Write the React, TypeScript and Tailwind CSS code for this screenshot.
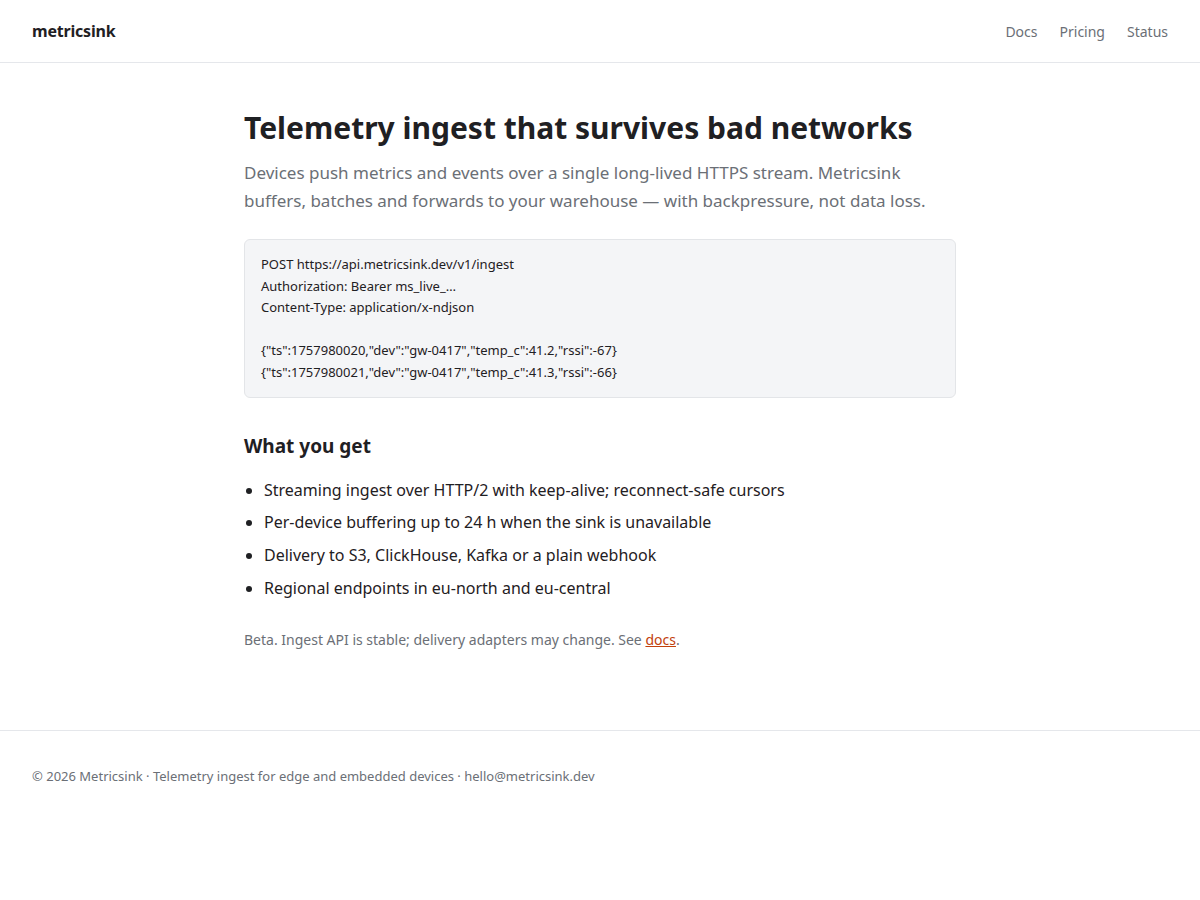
import React from 'react';

const features = [
  'Streaming ingest over HTTP/2 with keep-alive; reconnect-safe cursors',
  'Per-device buffering up to 24 h when the sink is unavailable',
  'Delivery to S3, ClickHouse, Kafka or a plain webhook',
  'Regional endpoints in eu-north and eu-central',
];

const codeLines = [
  'POST https://api.metricsink.dev/v1/ingest',
  'Authorization: Bearer ms_live_…',
  'Content-Type: application/x-ndjson',
  '',
  '{"ts":1757980020,"dev":"gw-0417","temp_c":41.2,"rssi":-67}',
  '{"ts":1757980021,"dev":"gw-0417","temp_c":41.3,"rssi":-66}',
];

export default function App() {
  return (
    <div className="min-h-screen bg-white text-[#1f2023] font-['Noto_Sans',sans-serif]">
      {/* Header */}
      <header className="h-[63px] border-b border-[#e5e7eb] flex items-center justify-between px-8">
        <span className="text-[16px] font-bold tracking-[-0.2px]">metricsink</span>
        <nav className="flex items-center gap-[22px] text-[14px] text-[#6b6f76]">
          <a href="#">Docs</a>
          <a href="#">Pricing</a>
          <a href="#">Status</a>
        </nav>
      </header>

      {/* Main */}
      <main className="max-w-[712px] mx-auto pt-[43px] pb-[80px]">
        <h1 className="text-[30px] font-bold leading-[44px]">
          Telemetry ingest that survives bad networks
        </h1>
        <p className="mt-[9px] text-[17px] leading-[28px] text-[#6b6f76]">
          Devices push metrics and events over a single long-lived HTTPS stream. Metricsink buffers, batches and forwards to your warehouse — with backpressure, not data loss.
        </p>

        <pre className="mt-[24px] bg-[#f4f5f7] border border-[#e3e5e8] rounded-md px-4 pt-[14px] pb-[13px] text-[13px] leading-[21.6px] font-['Noto_Sans',sans-serif] whitespace-pre">
          {codeLines.map((l, i) => (
            <div key={i} className="h-[21.6px]">{l}</div>
          ))}
        </pre>

        <h2 className="mt-[33px] text-[19px] font-bold leading-[30px]">What you get</h2>
        <ul className="mt-[17px] list-disc pl-5 text-[16px] leading-[24px] space-y-[8.7px]">
          {features.map((f) => (
            <li key={f}>{f}</li>
          ))}
        </ul>

        <p className="mt-[29px] text-[14px] text-[#6b6f76]">
          Beta. Ingest API is stable; delivery adapters may change. See{' '}
          <a href="#" className="text-[#c2410c] underline">docs</a>.
        </p>
      </main>

      {/* Footer */}
      <footer className="border-t border-[#e5e7eb] px-8 pt-[36px] pb-10">
        <p className="text-[13px] text-[#6b6f76]">
          © 2026 Metricsink · Telemetry ingest for edge and embedded devices · hello@metricsink.dev
        </p>
      </footer>
    </div>
  );
}
